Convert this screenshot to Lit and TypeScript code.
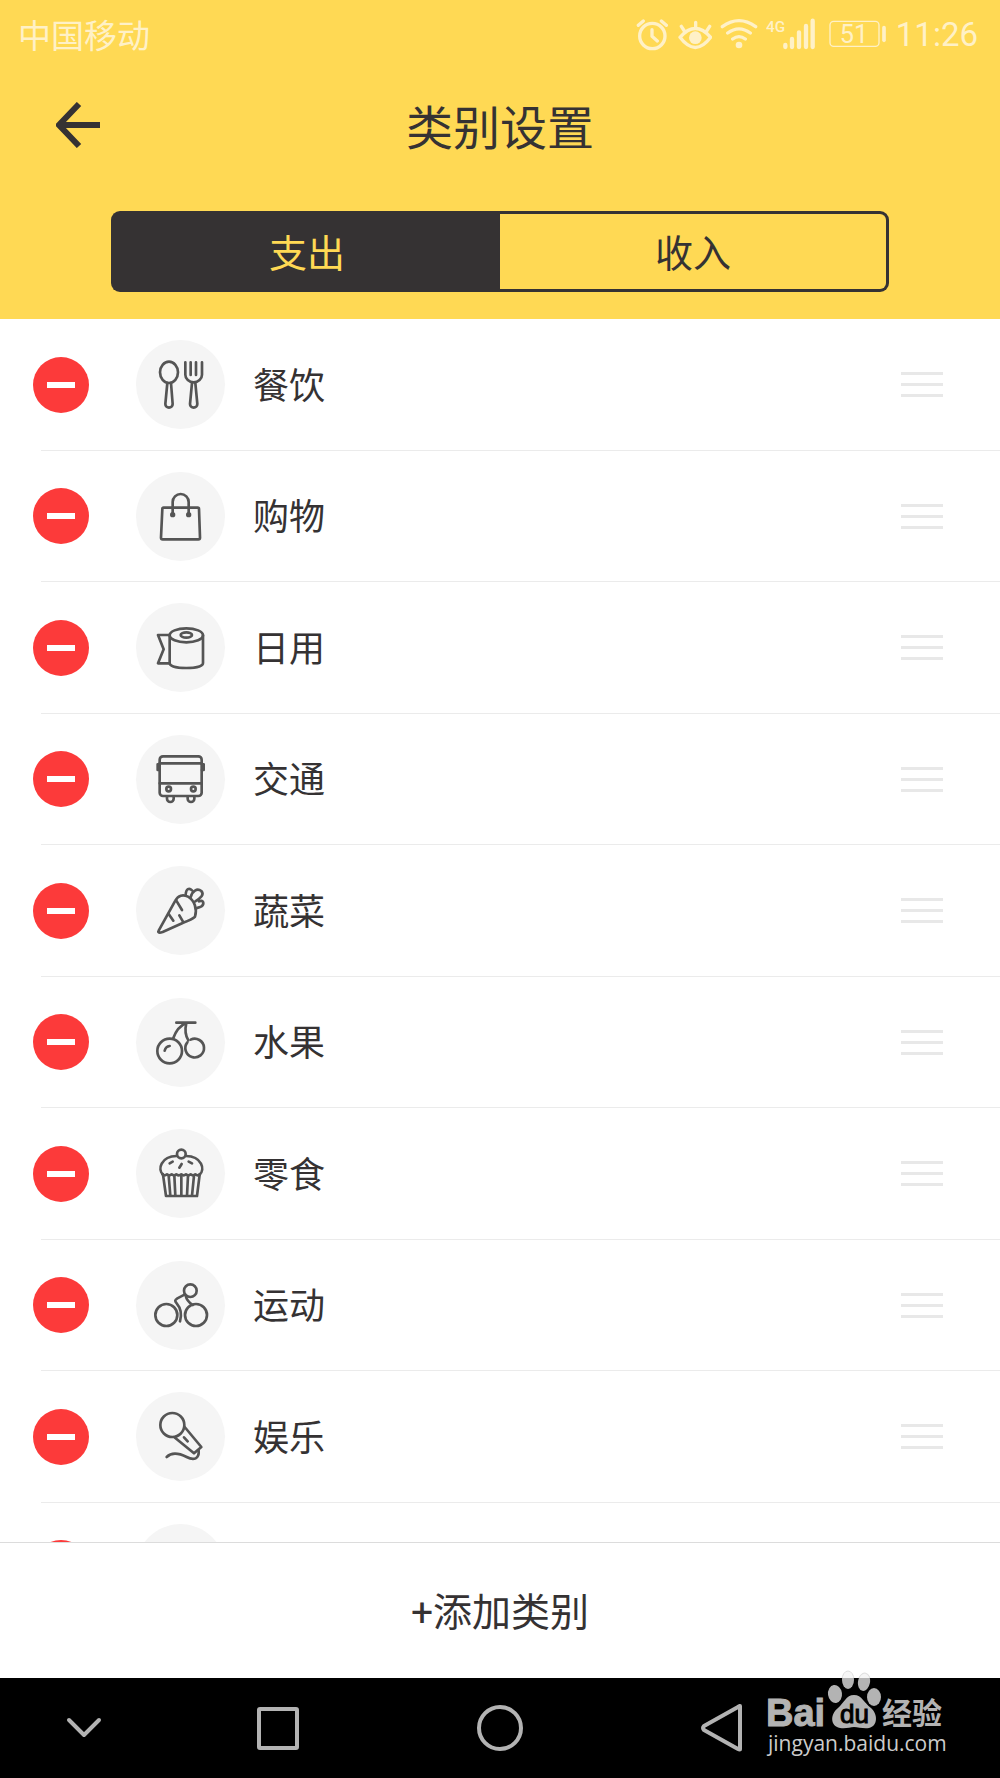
import { LitElement, html, css, svg, nothing, type SVGTemplateResult } from "lit";
import { customElement, property, state } from "lit/decorators.js";
import { classMap } from "lit/directives/class-map.js";

interface Category {
  name: string;
  icon: SVGTemplateResult | typeof nothing;
}

const cutlery = svg`
  <ellipse cx="99" cy="97" rx="27" ry="32"/>
  <path d="M94 129L88 192a11 11 0 0 0 22 0L105 129"/>
  <path d="M148 67V104a25 23 0 0 0 50 0V67M164 67V105M180 67V105"/>
  <path d="M168 129L162 192a11 11 0 0 0 22 0L178 129"/>`;

const bag = svg`
  <path d="M83 107H185Q189 107 189 111L192 197Q192 202 187 202H80Q75 202 75 197L79 111Q79 107 83 107Z"/>
  <path d="M110 128V90a24 24 0 0 1 48 0V128"/>
  <circle class="solid" cx="110" cy="128" r="4"/>
  <circle class="solid" cx="158" cy="128" r="4"/>`;

const roll = svg`
  <ellipse cx="151" cy="97" rx="50" ry="21"/>
  <ellipse cx="151" cy="96" rx="17" ry="8"/>
  <path d="M101 97V180C101 190 122 195 151 195S201 190 201 180V97"/>
  <path d="M101 96H66L83 139L66 181H101"/>`;

const bus = svg`
  <rect x="71" y="64" width="126" height="119" rx="10"/>
  <path d="M71 85H197M71 145H197"/>
  <circle cx="98" cy="162" r="7"/><circle cx="172" cy="162" r="7"/>
  <path d="M70 88H65V105H70M198 88H203V105H198"/>
  <path d="M93 185V191a10 10 0 0 0 20 0V185M155 185V191a10 10 0 0 0 20 0V185"/>`;

const carrot = svg`
  <path d="M68 194L118 104C126 88 141 84 156 92C176 103 184 130 177 152C168 160 150 167 140 171L80 198C70 201 64 200 68 194Z"/>
  <path d="M121 104L138 132M98 144L112 164M130 148L141 167"/>
  <path d="M149 87C150 67 160 65 168 73M164 94C168 74 184 66 196 75C206 86 194 96 178 106M189 106C202 100 206 112 197 121C191 126 187 122 182 127"/>`;

const cherries = svg`
  <circle cx="101" cy="159" r="37"/>
  <path d="M154 133A28 28 0 1 0 164 125"/>
  <path d="M121 74H178M112 120C120 98 134 82 150 75M151 75C146 96 149 114 157 127M86 158C88 149 93 145 101 144"/>`;

const cupcake = svg`
  <circle cx="136" cy="75" r="13"/>
  <path d="M81 136C64 122 74 82 122 81M150 81C198 82 208 122 191 136"/>
  <path d="M81 137L90 201H183L191 137"/>
  <path d="M79 136q7 6 14 0q7 6 14 0q7 6 14 0q8 6 15 0q7 6 14 0q7 6 14 0q7 6 14 0q7 6 14 0"/>
  <path d="M98 140L103 200M115 140L118 200M136 140V200M156 140L153 200M174 140L168 200"/>
  <path d="M101 103L110 98M130 116L137 105M158 98L168 103"/>`;

const cyclist = svg`
  <circle cx="91" cy="162" r="33"/><circle cx="180" cy="162" r="33"/>
  <circle cx="163" cy="89" r="19"/>
  <path d="M147 100L124 112C116 117 116 121 122 127C134 141 138 160 132 181"/>
  <path d="M149 104C152 118 160 125 170 132"/>`;

const microphone = svg`
  <circle cx="109" cy="99" r="36"/>
  <path d="M117 137L174 184L196 165L146 105M144 136L155 148"/>
  <path d="M92 195C108 179 130 184 152 195C174 207 190 200 188 176"/>`;

const categories: Category[] = [
  { name: "餐饮", icon: cutlery },
  { name: "购物", icon: bag },
  { name: "日用", icon: roll },
  { name: "交通", icon: bus },
  { name: "蔬菜", icon: carrot },
  { name: "水果", icon: cherries },
  { name: "零食", icon: cupcake },
  { name: "运动", icon: cyclist },
  { name: "娱乐", icon: microphone },
  { name: "", icon: nothing },
];

const base = css`
  * { box-sizing: border-box; }
  svg { display: block; }
  button {
    appearance: none;
    margin: 0;
    padding: 0;
    border: 0;
    background: none;
    color: inherit;
    font: inherit;
    cursor: pointer;
  }
`;

@customElement("status-bar")
export class StatusBar extends LitElement {
  static styles = [base, css`
    :host {
      display: flex;
      align-items: center;
      justify-content: space-between;
      box-sizing: border-box;
      height: 68px;
      padding: 1px 22px 0 18px;
      color: #fff1c7;
      font-family: Roboto, "Noto Sans CJK SC", sans-serif;
      font-size: 33px;
      line-height: 40px;
    }
    .carrier { padding-top: 4px; }
    .icons { display: flex; align-items: center; gap: 8px; }
    .line { fill: none; stroke: currentColor; stroke-width: 10; stroke-linecap: round; stroke-linejoin: round; }
    .signal { stroke-width: 13; }
    .cap { stroke-width: 11; }
    .fill { fill: currentColor; }
    .net { fill: currentColor; font: 500 46px Roboto, sans-serif; }
    .level { fill: currentColor; font: 400 76px Roboto, sans-serif; text-anchor: middle; }
    .frame { fill: none; stroke: currentColor; stroke-width: 4; }
  `];

  render() {
    return html`
      <span class="carrier">中国移动</span>
      <div class="icons">
        <svg width="34" height="36" viewBox="108 48 102 108" aria-hidden="true">
          <g class="line">
            <circle cx="157" cy="105" r="38"/>
            <path d="M156 86V106L172 120M115 73L130 60M199 73L184 60"/>
          </g>
        </svg>
        <svg width="34" height="36" viewBox="234 48 102 108" aria-hidden="true">
          <path class="line" d="M240 109Q286 56 332 109Q286 170 240 109ZM287 64V80M244 76L253 90M329 76L320 90"/>
          <circle class="fill" cx="286" cy="110" r="19"/>
        </svg>
        <svg width="38" height="36" viewBox="360 48 114 108" aria-hidden="true">
          <path class="line" d="M367 77Q417 41 467 77M383 96Q417 71 451 96M398 114Q417 100 436 114"/>
          <circle class="fill" cx="417" cy="132" r="10"/>
        </svg>
        <svg width="54" height="36" viewBox="498 48 162 108" aria-hidden="true">
          <text class="net" x="498" y="93">4G</text>
          <path class="line signal" d="M556 132V138M576 114V138M597 94V138M618 75V138M638 59V138"/>
        </svg>
        <svg width="60" height="36" viewBox="684 48 180 108" aria-hidden="true">
          <rect class="frame" x="690" y="61" width="147" height="75" rx="11"/>
          <path class="line cap" d="M852 80V118"/>
          <text class="level" x="762" y="125">51</text>
        </svg>
        <span>11:26</span>
      </div>
    `;
  }
}

@customElement("category-row")
export class CategoryRow extends LitElement {
  @property() name = "";
  @property({ attribute: false }) icon: SVGTemplateResult | typeof nothing = nothing;

  static styles = [base, css`
    :host {
      display: flex;
      align-items: center;
      box-sizing: border-box;
      height: 100%;
      padding-right: 57px;
    }
    .remove {
      display: grid;
      place-items: center;
      flex: none;
      width: 56px;
      height: 56px;
      margin: 0 47px 0 -8px;
      border-radius: 50%;
      background: #fc3a3a;
    }
    .dash { width: 28px; height: 6px; background: #fff; }
    .badge {
      flex: none;
      width: 89px;
      height: 89px;
      margin-right: 28px;
      border-radius: 50%;
      background: #f5f5f5;
    }
    .badge svg {
      fill: none;
      stroke: #555;
      stroke-width: 8;
      stroke-linecap: round;
      stroke-linejoin: round;
    }
    .solid { fill: #555; }
    .name { flex: 1; padding-top: 4px; font-size: 36px; line-height: 48px; }
    .drag { display: grid; gap: 8px; width: 42px; cursor: grab; }
    .bar { height: 3px; background: #e8e8e8; }
  `];

  render() {
    return html`
      <button class="remove" aria-label=${"删除" + this.name}><span class="dash"></span></button>
      <span class="badge">
        <svg width="89" height="89" viewBox="0 0 267 267" aria-hidden="true">${this.icon}</svg>
      </span>
      <span class="name">${this.name}</span>
      <button class="drag" aria-label=${"排序" + this.name}>
        <span class="bar"></span><span class="bar"></span><span class="bar"></span>
      </button>
    `;
  }
}

@customElement("site-mark")
export class SiteMark extends LitElement {
  static styles = [base, css`
    :host { display: block; pointer-events: none; }
    text { fill: #b3b3b3; }
    .latin { font: bold 38px "Liberation Sans", sans-serif; stroke: #b3b3b3; stroke-width: 1; }
    .du { font: 26px "Liberation Sans", sans-serif; fill: #000; stroke: #000; stroke-width: 1; }
    .han { font: bold 30px "Noto Sans CJK SC", sans-serif; }
    .url { font: 21px "Open Sans", sans-serif; fill: #ccc; }
    .paw { fill: #b3b3b3; }
    .tip { fill: #f6f6f6; stroke: #dedede; stroke-width: 1; }
  `];

  render() {
    return html`
      <svg width="190" height="90" viewBox="0 0 190 90" role="img" aria-label="Baidu 经验">
        <defs>
          <clipPath id="above"><rect width="190" height="8"/></clipPath>
          <clipPath id="below"><rect y="8" width="190" height="82"/></clipPath>
        </defs>
        <g class="tip" clip-path="url(#above)">
          <ellipse cx="88" cy="10" rx="6" ry="9"/>
          <ellipse cx="104" cy="12" rx="6" ry="9" transform="rotate(10 104 12)"/>
        </g>
        <g class="paw" clip-path="url(#below)">
          <ellipse cx="75" cy="24" rx="7" ry="9" transform="rotate(-8 75 24)"/>
          <ellipse cx="88" cy="10" rx="6" ry="9"/>
          <ellipse cx="104" cy="12" rx="6" ry="9" transform="rotate(10 104 12)"/>
          <ellipse cx="114" cy="27" rx="7" ry="9"/>
          <path d="M94 25C86 25 84 33 78 38C70 44 70 56 80 58C86 59 90 57 94 57S104 59 109 58C118 56 118 44 111 38C104 33 102 25 94 25Z"/>
        </g>
        <text class="latin" x="6" y="56">Bai</text>
        <text class="du" x="80" y="53">du</text>
        <text class="han" x="122" y="54">经验</text>
        <text class="url" x="8" y="81">jingyan.baidu.com</text>
      </svg>
    `;
  }
}

@customElement("app-root")
export class AppRoot extends LitElement {
  @state() private tab = 0;

  static styles = [base, css`
    :host {
      display: flex;
      flex-direction: column;
      height: 100vh;
      overflow: hidden;
      background: #fff;
      color: #353233;
      font-family: Roboto, "Noto Sans CJK SC", sans-serif;
    }
    .header { flex: none; padding-bottom: 27px; background: #ffd954; }
    .titlebar {
      display: grid;
      grid-template-columns: 1fr auto 1fr;
      align-items: center;
      height: 114px;
      padding: 0 56px;
    }
    .back { justify-self: start; }
    .back svg { fill: none; stroke: currentColor; stroke-width: 6; }
    .title { margin: 0; padding-top: 8px; font-size: 47px; line-height: 60px; font-weight: 400; }
    .tabs { display: flex; height: 81px; margin: 29px 111px 0; }
    .tab {
      flex: 1;
      padding-top: 4px;
      border: 3px solid #353233;
      font-size: 38px;
      line-height: 48px;
    }
    .tab:first-child { border-right: 0; border-radius: 9px 0 0 9px; }
    .tab:last-child { border-left: 0; border-radius: 0 9px 9px 0; }
    .tab.active { background: #353233; color: #ffd954; }
    .list {
      flex: 1;
      min-height: 0;
      margin: 0;
      padding: 0;
      overflow: hidden;
      list-style: none;
    }
    .item { height: 132px; margin-left: 41px; border-bottom: 1px solid #ebebeb; }
    .item:nth-child(even) { height: 131px; }
    .add {
      flex: none;
      height: 136px;
      padding-top: 4px;
      border-top: 1px solid #dcdcdc;
      background: #fff;
      font-size: 39px;
      line-height: 48px;
    }
    .nav {
      position: relative;
      flex: none;
      display: grid;
      grid-template-columns: 167fr 222fr 222fr 222fr 167fr;
      height: 100px;
      background: #000;
    }
    .key { display: grid; place-items: center; }
    .key svg { fill: none; stroke: #b3b3b3; stroke-width: 4; stroke-linejoin: round; stroke-linecap: round; }
    .mark { position: absolute; right: 50px; bottom: 18px; }
  `];

  render() {
    return html`
      <header class="header">
        <status-bar></status-bar>
        <div class="titlebar">
          <button class="back" aria-label="返回">
            <svg width="46" height="46" viewBox="0 0 46 46"><path d="M23 2L3 23L23 44M3 23H44"/></svg>
          </button>
          <h1 class="title">类别设置</h1>
        </div>
        <div class="tabs">
          ${["支出", "收入"].map((label, i) => html`
            <button class=${classMap({ tab: true, active: this.tab === i })}
              aria-pressed=${this.tab === i ? "true" : "false"}
              @click=${() => { this.tab = i; }}>${label}</button>`)}
        </div>
      </header>
      <ul class="list">
        ${categories.map((c) => html`
          <li class="item"><category-row .name=${c.name} .icon=${c.icon}></category-row></li>`)}
      </ul>
      <button class="add">+添加类别</button>
      <nav class="nav">
        <button class="key" aria-label="收起">
          <svg width="50" height="50" viewBox="0 0 50 50"><path d="M10 17L25 32L40 17"/></svg>
        </button>
        <button class="key" aria-label="最近任务">
          <svg width="50" height="50" viewBox="0 0 50 50"><rect x="6" y="6" width="38" height="39" rx="1"/></svg>
        </button>
        <button class="key" aria-label="主屏幕">
          <svg width="50" height="50" viewBox="0 0 50 50"><circle cx="25" cy="25" r="21"/></svg>
        </button>
        <button class="key" aria-label="后退">
          <svg width="50" height="50" viewBox="0 0 50 50"><path d="M43 3V46Q43 47 41 46L7 27Q5 25 7 23L41 4Q43 2 43 4Z"/></svg>
        </button>
        <site-mark class="mark"></site-mark>
      </nav>
    `;
  }
}
